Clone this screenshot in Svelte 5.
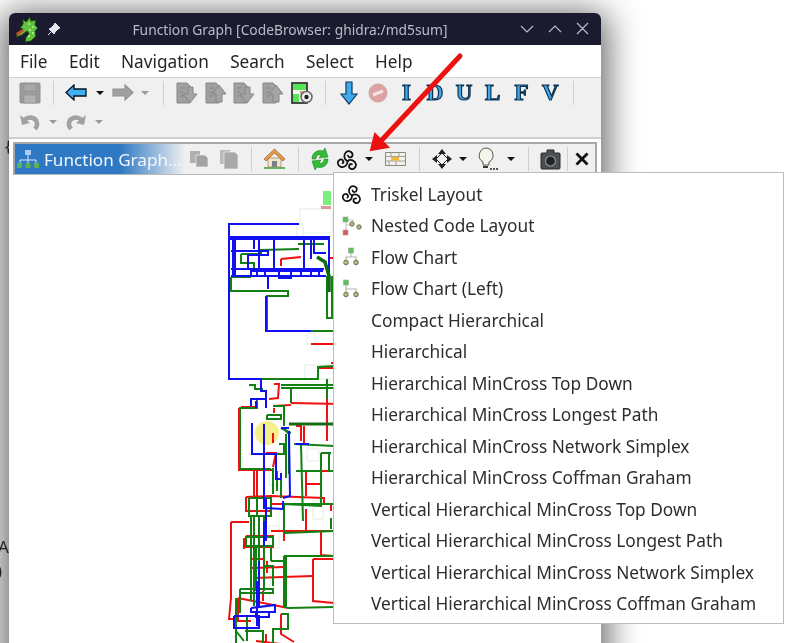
<script>
  const pages = ['down', 'up', 'down', 'up'];
  const letters = ['I', 'D', 'U', 'L', 'F', 'V'];
  const layouts = [
    { name: 'Triskel Layout', icon: 'triskel' },
    { name: 'Nested Code Layout', icon: 'nested' },
    { name: 'Flow Chart', icon: 'flow' },
    { name: 'Flow Chart (Left)', icon: 'flowleft' },
    { name: 'Compact Hierarchical' },
    { name: 'Hierarchical' },
    { name: 'Hierarchical MinCross Top Down' },
    { name: 'Hierarchical MinCross Longest Path' },
    { name: 'Hierarchical MinCross Network Simplex' },
    { name: 'Hierarchical MinCross Coffman Graham' },
    { name: 'Vertical Hierarchical MinCross Top Down' },
    { name: 'Vertical Hierarchical MinCross Longest Path' },
    { name: 'Vertical Hierarchical MinCross Network Simplex' },
    { name: 'Vertical Hierarchical MinCross Coffman Graham' }
  ];

  // edges of the graph, in page coordinates
  const green = [
    '230,276 250,276', '230,276 230,290 287,290 287,295 266,295 266,330 340,330',
    '240,253 240,262 253,262 253,268', '240,253 260,253 260,249 298,248',
    '297,243 323,243', '326,275 326,317 340,317', '331,275 331,317',
    '260,378 317,378 317,366 334,365', '326,378 326,398',
    '248,384 254,384 254,388 262,388', '280,384 340,384', '280,387 340,387', '290,387 290,402',
    '238,407 256,407 256,398 250,398', '239,408 239,468 270,468',
    '272,405 283,405 283,425', '266,414 280,414 280,418 266,418 266,414',
    '280,427 290,432', '282,427 288,433', '288,433 288,473', '285,433 285,477',
    '278,443 283,443 283,453 275,453', '293,443 333,445',
    '320,452 320,505 283,503 283,532', '320,452 330,452', '328,452 328,470 333,470',
    '272,467 272,493', '276,470 276,490', '280,478 280,497',
    '248,497 270,497 270,515 248,515 248,497', '256,497 256,515',
    '283,503 333,503', '283,532 333,530', '250,515 250,600', '253,515 253,605', '258,515 258,600', '263,515 263,590',
    '245,536 272,536', '245,545 272,545 272,536', '245,536 245,545',
    '270,547 270,560', '255,546 255,590', '283,555 333,555', '283,555 283,607', '285,556 285,607',
    '239,588 272,588 272,592 240,592', '239,588 239,612', '235,597 235,630 243,640',
    '287,607 333,606', '280,613 287,613 287,628 272,628 272,643', '235,630 235,643',
    '262,565 272,565 272,585', '270,560 283,560', '300,443 302,520', '330,517 330,528', '295,470 320,470',
    '244,630 262,630 262,643', '246,615 246,640'
  ];
  const blue = [
    '260,385 260,378 228,378 228,223 298,223',
    '228,236 328,236 328,275', '229,238 327,238',
    '232,236 232,275', '234,236 234,275',
    '230,250 267,250 267,254 247,254 247,268',
    '253,236 253,248', '258,236 258,268', '273,236 273,268', '303,236 303,268', '310,236 310,258',
    '313,236 313,252 325,252',
    '230,268 323,268', '230,275 325,275', '250,270 322,270',
    '250,268 250,275', '256,268 256,275', '264,268 264,275', '278,268 278,277 290,277 290,268', '300,268 300,275', '310,268 310,275', '318,268 318,275',
    '267,275 267,288', '265,295 265,330 310,330',
    '260,385 260,390 265,390 265,398 250,398 250,405',
    '255,400 255,407', '265,398 265,407',
    '251,422 251,453 275,453 275,478 280,478 280,472',
    '263,423 263,507 282,508 282,500', '288,430 289,495 282,497',
    '295,443 308,443', '280,427 288,427',
    '265,497 265,540', '263,520 263,545', '258,560 258,607', '256,580 256,625',
    '250,607 274,604 274,611 250,611 250,607',
    '255,611 268,611 268,616 255,616 255,611',
    '233,615 258,615 258,627 233,627 233,615'
  ];
  const red = [
    '280,258 300,256', '280,258 280,265',
    '310,343 340,343', '328,257 340,257', '328,257 328,275',
    '330,362 340,362', '317,367 340,367',
    '273,383 278,383 277,397 268,398',
    '290,402 340,403', '326,383 326,440',
    '238,407 238,469 272,469', '238,407 254,406', '240,406 255,406',
    '272,405 290,404', '273,407 273,412', '303,425 303,443',
    '295,425 300,425 300,440', '253,470 253,497', '256,470 256,500',
    '272,432 272,442', '265,452 275,452 272,466',
    '245,496 245,510 270,510', '245,496 270,495 323,497 323,503 270,503',
    '305,495 305,483 320,483', '305,483 305,470 338,470', '305,470 333,470',
    '230,521 248,521', '230,521 230,597 228,618 233,618',
    '245,535 272,535 272,546 245,546 245,535', '243,537 243,548',
    '270,530 333,530', '320,530 320,554 333,555', '283,530 283,540',
    '312,558 333,558', '312,558 312,600 333,602',
    '250,560 250,567 283,566', '250,558 263,558',
    '252,577 312,575', '237,597 287,607', '237,597 237,620 250,620',
    '280,613 280,633 293,641', '265,633 265,643', '255,640 280,643',
    '305,508 305,530', '330,503 330,510',
    '262,590 262,600', '266,560 266,572', '258,585 258,597'
  ];
  const vertices = [
    [299, 208, 32, 24], [296, 223, 6, 13], [306, 332, 8, 11], [304, 364, 35, 14],
    [306, 448, 12, 12], [268, 470, 12, 14], [312, 500, 10, 18], [268, 525, 10, 22], [255, 570, 14, 36]
  ];
  const arms = [0, 120, 240];
</script>

{#snippet caret(dim)}
  <span class="caret" class:dim></span>
{/snippet}

{#snippet triskel(size)}
  <svg width={size} height={size} viewBox="0 0 20 20" fill="none" stroke="#111" stroke-width="1.700" stroke-linecap="round">
    {#each arms as angle}
      <path transform="rotate({angle} 10 11.500)" d="M10 11.500C6.500 10 6 5.500 8.500 3.200 11 1 15 2.500 14.800 5.700 14.600 8.500 10.800 8.800 10.500 6.400" />
    {/each}
  </svg>
{/snippet}

{#snippet layoutIcon(kind)}
  {#if kind === 'triskel'}
    {@render triskel(20)}
  {:else if kind === 'nested'}
    <svg width="20" height="20" viewBox="0 0 20 20">
      <path d="M4 4h7v3M4 4v12M5 9h6" fill="none" stroke="#c9c9bd" stroke-width="1.200" />
      <rect x="1" y="1" width="5" height="5" fill="#5cc05c" stroke="#9a9" stroke-width=".6" />
      <rect x="1" y="14" width="5" height="5" fill="#d85a5a" stroke="#b99" stroke-width=".6" />
      <circle cx="10" cy="8" r="2.200" fill="#b9b68a" stroke="#6f6d4c" />
      <circle cx="17" cy="11" r="2.200" fill="#b9b68a" stroke="#6f6d4c" />
    </svg>
  {:else if kind === 'flow'}
    <svg width="18" height="20" viewBox="0 0 18 20">
      <path d="M9 5v5M4 15v-5h10v5" fill="none" stroke="#b8b8ac" stroke-width="1.200" />
      <rect x="6.500" y="1" width="5" height="5" fill="#5cc05c" stroke="#9a9" stroke-width=".6" />
      <circle cx="4" cy="15.500" r="2.300" fill="#b9b68a" stroke="#6f6d4c" />
      <circle cx="14" cy="15.500" r="2.300" fill="#b9b68a" stroke="#6f6d4c" />
    </svg>
  {:else if kind === 'flowleft'}
    <svg width="18" height="20" viewBox="0 0 18 20">
      <path d="M4 5v10M4 10h10v5" fill="none" stroke="#b8b8ac" stroke-width="1.200" />
      <rect x="1.500" y="1" width="5" height="5" fill="#5cc05c" stroke="#9a9" stroke-width=".6" />
      <circle cx="4" cy="15.500" r="2.300" fill="#b9b68a" stroke="#6f6d4c" />
      <circle cx="14" cy="15.500" r="2.300" fill="#b9b68a" stroke="#6f6d4c" />
    </svg>
  {/if}
{/snippet}

{#snippet page(dir)}
  <svg width="22" height="22" viewBox="0 0 22 22">
    <path d="M1 1h10l3 3v17H1z" fill="#a0a0a0" stroke="#888" />
    <path d="M4 6h5M4 10h3M4 14h4" stroke="#858585" stroke-width="1" />
    {#if dir === 'down'}
      <path d="M12 5h5v7h4l-7 9-7-9h5z" fill="#a4a4a4" stroke="#858585" />
    {:else}
      <path d="M14 3l7 9h-4v8h-6v-8H7z" fill="#a4a4a4" stroke="#858585" />
    {/if}
  </svg>
{/snippet}

<div class="desktop">
  <div class="behind">
    <span class="behind-brace">&#123;</span>
    <span class="behind-ab">AI</span>
    <span class="behind-paren">)</span>
  </div>

  <div class="window">
    <header class="titlebar">
      <svg class="dragon" width="24" height="26" viewBox="0 0 24 26">
        <path d="M8 3l3 3 4-5 1 4 5-1-1 5 3 3-3 3 1 5-5 5-6 1 1-5 3-3-2-3-5 4-6 2 1-3 6-5-3-1 3-4z" fill="#5fc23c" stroke="#1f3f1a" stroke-width="1" />
        <path d="M1 17l7-4 1 2-6 5z" fill="#c8502a" />
        <path d="M13 8h2M17 11h2M14 14h2M17 17h2M13 20h2" stroke="#c7f0a0" stroke-width="1.500" />
      </svg>
      <svg class="pin" width="14" height="14" viewBox="0 0 14 14">
        <path d="M8 1l5 5-2 1-3 3-1 2-5-5 2-1 3-3zM4 10l-3 3" fill="#e4e6ee" stroke="#e4e6ee" stroke-width="1" />
      </svg>
      <span class="title">Function Graph [CodeBrowser: ghidra:/md5sum]</span>
      <svg class="wm" width="72" height="14" viewBox="0 0 72 14" fill="none" stroke="#b9bcc8" stroke-width="1.200">
        <path d="M1 4l6 6 6-6M29 10l6-6 6 6M57 1l11 11M68 1L57 12" />
      </svg>
    </header>

    <nav class="menubar">
      <span>File</span><span>Edit</span><span>Navigation</span><span>Search</span><span>Select</span><span>Help</span>
    </nav>

    <div class="toolbar">
      <div class="row">
        <span class="btn">
          <svg width="22" height="22" viewBox="0 0 22 22">
            <path d="M1 2a1 1 0 0 1 1-1h18a1 1 0 0 1 1 1v18a1 1 0 0 1-1 1H2a1 1 0 0 1-1-1z" fill="#9c9c9c" stroke="#909090" />
            <path d="M5 2h12v7H5z" fill="#a8a8a8" stroke="#8f8f8f" stroke-width=".6" />
            <path d="M5 13h12v8H5z" fill="#b2b2b2" stroke="#8f8f8f" stroke-width=".6" />
          </svg>
        </span>
        <i class="sep"></i>
        <span class="btn">
          <svg class="back" width="22" height="17" viewBox="0 0 22 17">
            <path d="M9 1L1 8.500 9 16v-4h12V5H9z" fill="#3fb0f2" stroke="#06121c" stroke-width="1.300" />
          </svg>
        </span>
        {@render caret(false)}
        <span class="btn">
          <svg width="22" height="17" viewBox="0 0 22 17">
            <path d="M13 1l8 7.500-8 7.500v-4H1V5h12z" fill="#a0a0a0" stroke="#929292" stroke-width="1.200" />
          </svg>
        </span>
        {@render caret(true)}
        <i class="sep"></i>
        {#each pages as dir}
          <span class="btn">{@render page(dir)}</span>
        {/each}
        <span class="btn">
          <svg width="22" height="22" viewBox="0 0 22 22">
            <path d="M1 1h15v20H1z" fill="#f2f2ee" stroke="#111" stroke-width="1.500" />
            <path d="M2 2h13v6H2zM2 12h6v8H2z" fill="#55e655" />
            <path d="M9 9h5v3H9z" fill="#c9a98a" />
            <circle cx="15.500" cy="15" r="5.500" fill="#eee" stroke="#666" stroke-width="1.500" />
            <circle cx="15.500" cy="15" r="2.200" fill="#222" />
          </svg>
        </span>
        <i class="sep"></i>
        <span class="btn">
          <svg width="18" height="24" viewBox="0 0 18 24">
            <path d="M6 1h6v12h5l-8 10-8-10h5z" fill="#3fa9ee" stroke="#12395c" stroke-width="1.200" />
          </svg>
        </span>
        <span class="btn">
          <svg width="20" height="20" viewBox="0 0 20 20">
            <circle cx="10" cy="10" r="9" fill="#dca3a3" stroke="#cfa0a0" />
            <path d="M5 12L15 8" stroke="#f4e4e4" stroke-width="3" />
          </svg>
        </span>
        {#each letters as letter}
          <span class="btn letter">{letter}</span>
        {/each}
        <i class="sep"></i>
      </div>

      <div class="row">
        <span class="btn">
          <svg width="22" height="18" viewBox="0 0 22 18">
            <path d="M5 7c5-4 12-3 13 3 .4 2-.4 4-2 6" fill="none" stroke="#a2a2a2" stroke-width="4.500" />
            <path d="M1 2l2 10 8-2z" fill="#a2a2a2" />
          </svg>
        </span>
        {@render caret(true)}
        <span class="btn">
          <svg width="22" height="18" viewBox="0 0 22 18">
            <path d="M17 7C12 3 5 4 4 10c-.4 2 .4 4 2 6" fill="none" stroke="#a2a2a2" stroke-width="4.500" />
            <path d="M21 2l-2 10-8-2z" fill="#a2a2a2" />
          </svg>
        </span>
        {@render caret(true)}
      </div>
    </div>

    <div class="provider">
      <div class="tab">
        <svg width="22" height="18" viewBox="0 0 22 18">
          <path d="M11 5v5M3 14v-4h16v4M11 10v4" fill="none" stroke="#d8e8f4" stroke-width="1" />
          <rect x="8" y="0" width="6" height="5" fill="#a9cdf2" />
          <rect x="0" y="13" width="5" height="5" fill="#58b058" />
          <rect x="8.500" y="13" width="5" height="5" fill="#58b058" />
          <rect x="17" y="13" width="5" height="5" fill="#58b058" />
        </svg>
        <span>Function Graph...</span>
      </div>
      <span class="btn">
        <svg width="20" height="18" viewBox="0 0 20 18">
          <path d="M1 1h10v12H1z" fill="#b0b0b0" />
          <path d="M7 5h9l3 3v9H7z" fill="#a2a2a2" stroke="#f0f0f0" stroke-width=".7" />
        </svg>
      </span>
      <span class="btn">
        <svg width="21" height="20" viewBox="0 0 21 20">
          <path d="M2 1h10v14H2z" fill="#bbb" />
          <path d="M6 3h11l3 3v14H6z" fill="#a8a8a8" stroke="#f0f0f0" stroke-width=".7" />
        </svg>
      </span>
      <i class="sep"></i>
      <span class="btn">
        <svg width="23" height="22" viewBox="0 0 23 22">
          <path d="M1 19h21v2H1z" fill="#5fb35f" />
          <path d="M5 10h13v9H5z" fill="#efe6cf" stroke="#a88a5c" stroke-width=".8" />
          <path d="M9 13h5v6H9z" fill="#7a8288" />
          <path d="M11.500 1L1 11l2 2 8.500-8L20 13l2-2z" fill="#e39a4c" stroke="#a9662a" stroke-width=".8" />
        </svg>
      </span>
      <i class="sep"></i>
      <span class="btn btn-tight">
        <svg width="20" height="22" viewBox="0 0 20 22">
          <path d="M2 11C2 5 7 1 13 3l2-3 3 9-9 1 2-3c-3-1-5 1-5 4z" fill="#33bb33" stroke="#1c8a24" stroke-width=".6" />
          <path d="M18 11c0 6-5 10-11 8l-2 3-3-9 9-1-2 3c3 1 5-1 5-4z" fill="#33bb33" stroke="#1c8a24" stroke-width=".6" />
        </svg>
      </span>
      <span class="btn btn-narrow">{@render triskel(21)}</span>
      <span class="caret caret-wide"></span>
      <span class="btn btn-wide">
        <svg width="21" height="14" viewBox="0 0 21 14">
          <path d="M.5.5h20v13H.5z" fill="#f3f1ea" stroke="#8a8a80" />
          <path d="M.5 4.500h20M.5 9h20M6 .5v4M14 .5v4M4 9v4.500M11 9v4.500M7 4.500V9" stroke="#a0a096" fill="none" />
          <path d="M7 5h7v3.500H7z" fill="#f0b840" />
        </svg>
      </span>
      <i class="sep"></i>
      <span class="btn btn-tight">
        <svg width="22" height="22" viewBox="0 0 22 22">
          <path d="M11 1l4 5h-3v3h-2V6H7zM11 21l-4-5h3v-3h2v3h3zM1 11l5-4v3h3v2H6v3zM21 11l-5 4v-3h-3v-2h3V7z" fill="#222" />
          <path d="M11 5l6 6-6 6-6-6z" fill="#f1f1f1" stroke="#222" />
        </svg>
      </span>
      {@render caret(false)}
      <span class="btn btn-wide">
        <svg width="22" height="24" viewBox="0 0 22 24">
          <path d="M11 1a7.500 7.500 0 0 0-4 14v3h6v-3a7.500 7.500 0 0 0-2-14z" fill="#f4f4ea" stroke="#555" />
          <path d="M7 20h5" stroke="#333" stroke-width="2" />
          <path d="M14 22h2M17 22h2M20 22h2" stroke="#222" stroke-width="1.500" />
        </svg>
      </span>
      {@render caret(false)}
      <i class="sep"></i>
      <span class="btn btn-tight">
        <svg width="21" height="22" viewBox="0 0 21 22">
          <path d="M7 5V2h7v3h5a1 1 0 0 1 1 1v14a1 1 0 0 1-1 1H2a1 1 0 0 1-1-1V6a1 1 0 0 1 1-1z" fill="#4a4f54" stroke="#26292c" />
          <circle cx="10.500" cy="13" r="5" fill="#222" stroke="#8a9095" stroke-width="1.200" />
        </svg>
      </span>
      <i class="sep sep-close"></i>
      <span class="close">
        <svg width="14" height="14" viewBox="0 0 14 14">
          <path d="M1.500 1.500l11 11M12.500 1.500l-11 11" stroke="#111" stroke-width="2.800" />
        </svg>
      </span>
    </div>

    <div class="canvas">
      <svg class="graph" width="592" height="470" viewBox="9 174 592 470" fill="none">
        {#each vertices as [x, y, w, h]}
          <rect {x} {y} width={w} height={h} fill="#fff" stroke="#e3eee3" />
        {/each}
        <rect x="322" y="190" width="8" height="14" fill="#7dee7d" />
        <rect x="320" y="205" width="10" height="3" fill="#d99" />
        <circle cx="266" cy="432" r="12" fill="#f6f08c" />
        {#each red as points}
          <polyline {points} stroke="#f01010" stroke-width="2" />
        {/each}
        {#each green as points}
          <polyline {points} stroke="#128012" stroke-width="2" />
        {/each}
        {#each blue as points}
          <polyline {points} stroke="#1010f0" stroke-width="2" />
        {/each}
        <path d="M316 256l8 5 4 14v16" stroke="#126b12" stroke-width="3.500" />
        <path d="M288 423h45" stroke="#126b12" stroke-width="3" />
      </svg>
    </div>

    <div class="menu">
      {#each layouts as item}
        <div class="item">
          <span class="item-icon">{#if item.icon}{@render layoutIcon(item.icon)}{/if}</span>
          <span>{item.name}</span>
        </div>
      {/each}
    </div>
  </div>

  <svg class="arrow" width="120" height="120" viewBox="0 0 120 120">
    <path d="M108 6L28 92" stroke="#ee1111" stroke-width="5" stroke-linecap="round" />
    <path d="M19 100L23 84 36 97z" fill="#ee1111" stroke="#ee1111" stroke-width="2" />
  </svg>
</div>

<style>
  :global(body) {
    margin: 0;
    background: #fff;
  }

  .desktop {
    position: relative;
    width: 795px;
    height: 643px;
    overflow: hidden;
    padding: 13px 0 0 9px;
    box-sizing: border-box;
    font-family: "Noto Sans", sans-serif;
    color: #232629;
    filter: blur(0.4px);
  }

  .behind {
    position: absolute;
    inset: 0;
    font-size: 17px;
    color: #333;
  }

  .behind span { position: absolute; }

  .behind-brace { top: 134px; left: 5px; }
  .behind-ab { top: 535px; left: -2px; }
  .behind-paren { top: 559px; left: -3px; }

  .window {
    position: relative;
    width: 592px;
    height: 660px;
    background: #fff;
    border-radius: 6px 6px 0 0;
    box-shadow: 0 6px 34px 6px rgba(0, 0, 0, 0.62);
    display: flex;
    flex-direction: column;
  }

  .titlebar {
    height: 32px;
    flex: none;
    background: #1a1b2e;
    border-radius: 6px 6px 0 0;
    display: flex;
    align-items: center;
    padding: 0 9px 0 6px;
    color: #b9bcc8;
  }

  .pin { margin-left: 8px; }

  .title {
    flex: 1;
    text-align: center;
    font-size: 13.800px;
    padding-right: 1px;
  }

  .menubar {
    height: 32px;
    flex: none;
    display: flex;
    align-items: center;
    gap: 21.400px;
    padding-left: 11px;
    font-size: 17.200px;
    border-bottom: 1px solid #d4d4d4;
  }

  .toolbar {
    flex: none;
    height: 59px;
    background: #f0f0f0;
    border-bottom: 2px solid #d0d0d0;
    padding-left: 7px;
  }

  .row {
    display: flex;
    align-items: center;
    height: 29px;
  }

  .btn {
    width: 28.800px;
    flex: none;
    display: flex;
    justify-content: center;
    align-items: center;
  }

  .back { margin-left: -3px; }

  .caret {
    width: 17px;
    flex: none;
    position: relative;
    height: 4px;
  }

  .caret::after {
    content: "";
    position: absolute;
    left: 4px;
    top: 0;
    border: 4px solid transparent;
    border-top: 4px solid #111;
    border-bottom: 0;
  }

  .caret.dim::after { border-top-color: #999; }

  .caret-wide { width: 18.300px; }

  .sep {
    width: 1px;
    height: 24px;
    flex: none;
    background: #cfcfcf;
    margin: 0 8.500px;
  }

  .letter {
    font-family: "Liberation Serif", serif;
    font-weight: 700;
    font-size: 23px;
    color: #3fa9ee;
    -webkit-text-stroke: 1.200px #0e2f4d;
  }

  .provider {
    flex: none;
    height: 33px;
    margin: 3px 4px 0;
    box-sizing: border-box;
    background: #f0f0f0;
    border: 2px solid #a8a8a8;
    border-bottom: 1px solid #b8b8b8;
    display: flex;
    align-items: center;
  }

  .tab {
    width: 170px;
    height: 100%;
    flex: none;
    background: linear-gradient(90deg, #2f79c4 0, #2f79c4 62%, #f0f0f0 100%);
    display: flex;
    align-items: center;
    gap: 5px;
    padding-left: 2px;
    box-sizing: border-box;
    color: #f2f6fb;
    font-size: 17.100px;
    white-space: nowrap;
  }

  .btn-tight { width: 26px; }
  .btn-narrow { width: 28px; }
  .btn-wide { width: 31px; }

  .close {
    width: 22px;
    display: flex;
    justify-content: center;
  }

  .sep-close { margin: 0 3px; }

  .canvas {
    flex: 1;
    background: #fff;
    margin-left: 1px;
  }

  .graph { display: block; }

  .menu {
    position: absolute;
    left: 324px;
    top: 159px;
    width: 451px;
    height: 452px;
    box-sizing: border-box;
    padding: 5.500px 0;
    background: #fff;
    border: 1px solid #bcbcbc;
    z-index: 2;
  }

  .item {
    height: 31.500px;
    display: flex;
    align-items: center;
    font-size: 17.300px;
    color: #2b2e31;
  }

  .item-icon {
    width: 37px;
    padding-left: 8px;
    box-sizing: border-box;
    display: flex;
    justify-content: flex-start;
  }

  .arrow {
    position: absolute;
    left: 352px;
    top: 50px;
    z-index: 3;
  }
</style>
